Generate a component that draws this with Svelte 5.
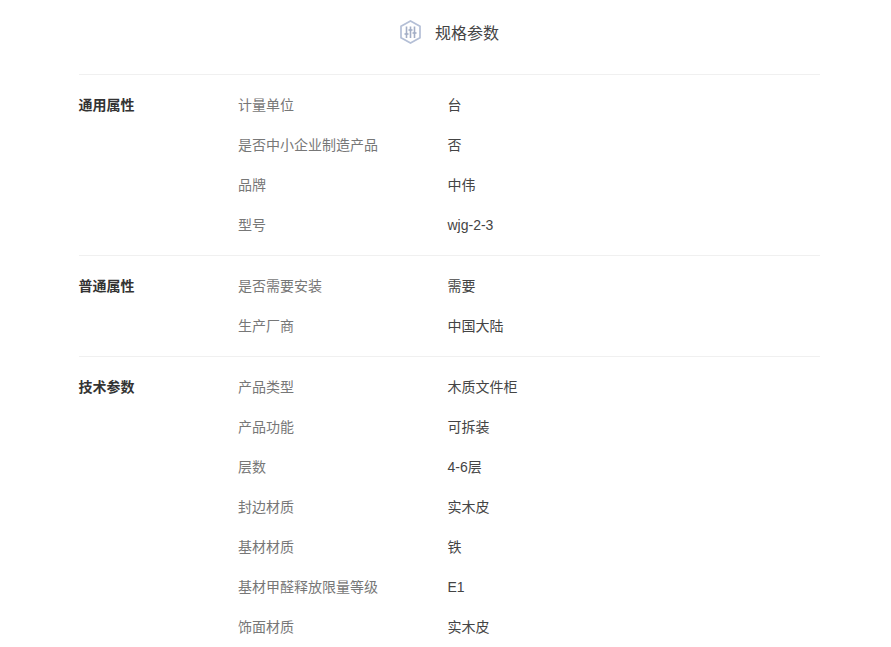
<script>
	const groups = [
		{
			name: '通用属性',
			rows: [
				['计量单位', '台'],
				['是否中小企业制造产品', '否'],
				['品牌', '中伟'],
				['型号', 'wjg-2-3']
			]
		},
		{
			name: '普通属性',
			rows: [
				['是否需要安装', '需要'],
				['生产厂商', '中国大陆']
			]
		},
		{
			name: '技术参数',
			rows: [
				['产品类型', '木质文件柜'],
				['产品功能', '可拆装'],
				['层数', '4-6层'],
				['封边材质', '实木皮'],
				['基材材质', '铁'],
				['基材甲醛释放限量等级', 'E1'],
				['饰面材质', '实木皮']
			]
		}
	];
</script>

<div class="page">
	<div class="title">
		<svg width="21" height="24" viewBox="0 0 21 24" fill="none">
			<path d="M10.5 1 L20 6.3 V17.7 L10.5 23 L1 17.7 V6.3 Z" stroke="#b4bfd6" stroke-width="1.7" />
			<g stroke="#a3aec6" stroke-width="1.6">
				<path d="M6.5 6.5 V18" />
				<path d="M10.5 6.5 V18" />
				<path d="M14.5 6.5 V18" />
				<path d="M4.5 14 H8.5" />
				<path d="M8.5 10 H12.5" />
				<path d="M12.5 13 H16.5" />
			</g>
		</svg>
		<span>规格参数</span>
	</div>
	{#each groups as group}
		<section class="group">
			<div class="name">{group.name}</div>
			<div class="rows">
				{#each group.rows as row}
					<div class="row">
						<div class="label">{row[0]}</div>
						<div class="value">{row[1]}</div>
					</div>
				{/each}
			</div>
		</section>
	{/each}
</div>

<style>
	:global(body) {
		background-color: #fff;
		margin: 0;
		overflow: hidden;
	}

	.page {
		box-sizing: border-box;
		width: 891px;
		height: 647px;
		padding: 0 71px 0 79px;
		font-family: "Liberation Sans", Arial, "Noto Sans CJK SC", sans-serif;
		font-size: 14px;
		overflow: hidden;
	}

	.title {
		display: flex;
		align-items: center;
		justify-content: center;
		gap: 14px;
		height: 74px;
		padding-bottom: 10px;
		box-sizing: border-box;
		font-size: 16px;
		color: #444;
	}

	.group {
		display: flex;
		border-top: 1px solid #f0f0f0;
		padding: 10px 0 10px;
	}

	.name {
		width: 159px;
		margin-left: -0.5px;
		padding-right: 0.5px;
		line-height: 40px;
		font-weight: bold;
		color: #333;
	}

	.rows {
		flex: 1;
	}

	.row {
		display: flex;
		height: 40px;
		line-height: 40px;
	}

	.label {
		width: 209.5px;
		color: #777;
	}

	.value {
		color: #444;
	}
</style>
